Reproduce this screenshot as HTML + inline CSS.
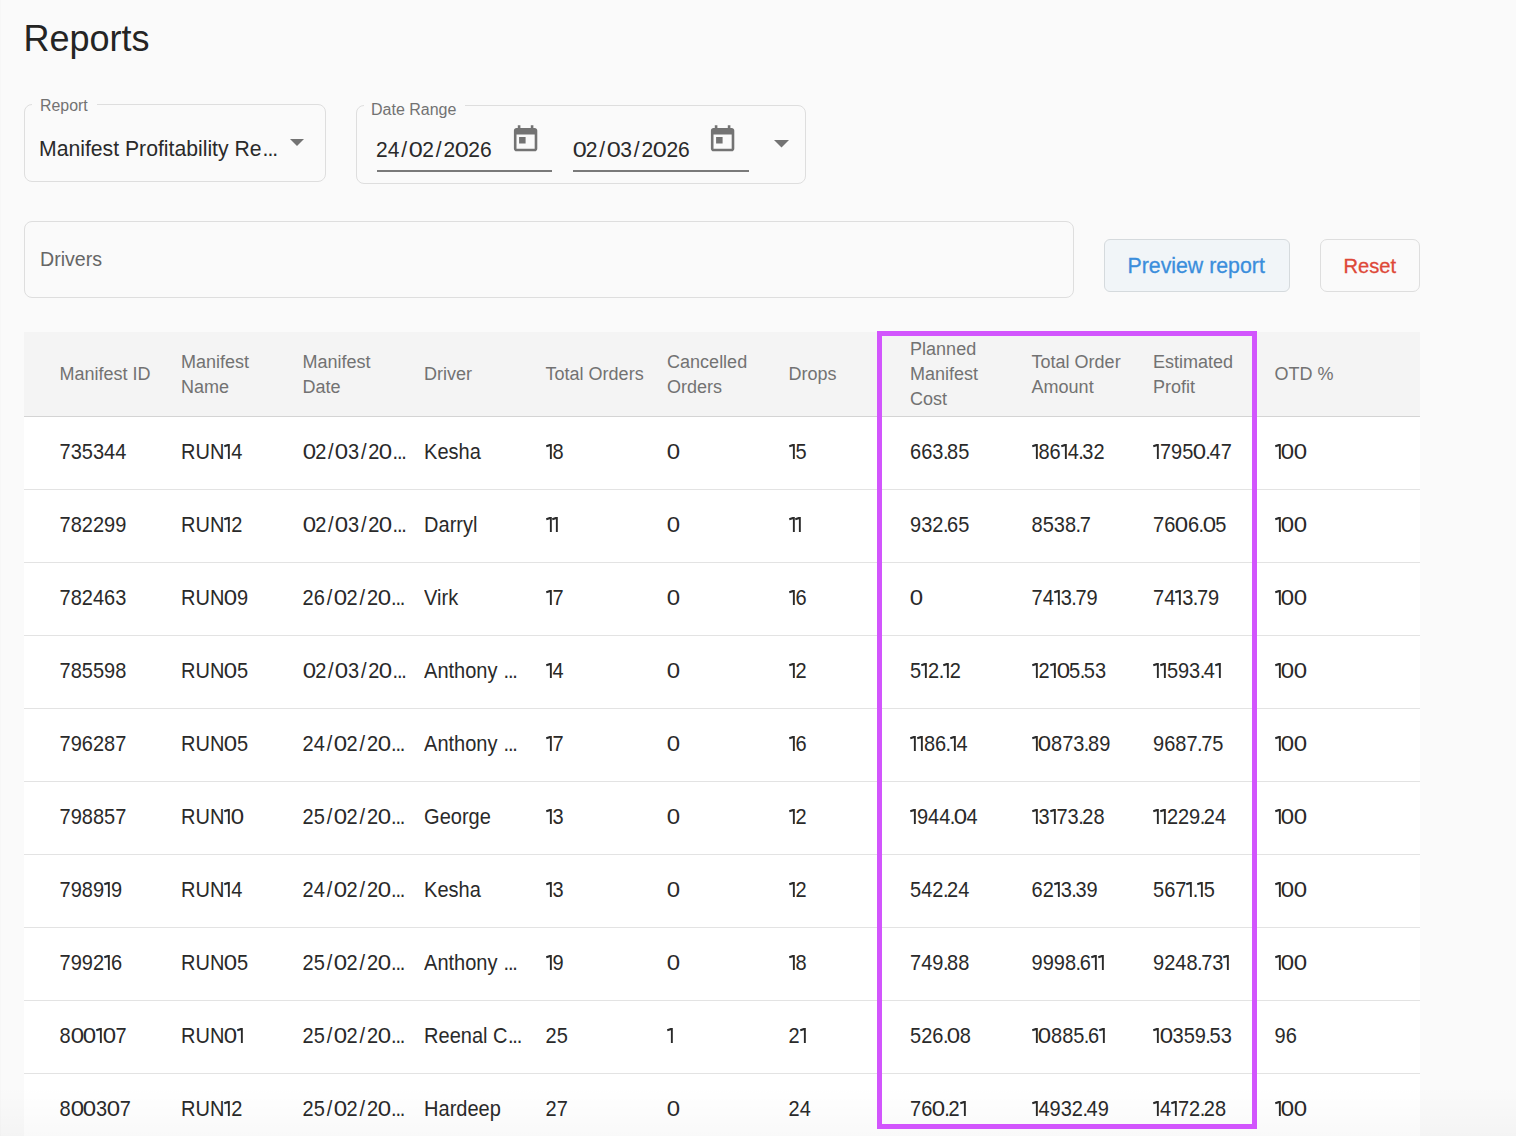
<!DOCTYPE html>
<html><head><meta charset="utf-8"><style>
html,body{margin:0;padding:0;}
body{width:1516px;height:1136px;overflow:hidden;background:#fafafa;position:relative;font-family:"Liberation Sans", sans-serif;}
.t{position:absolute;white-space:nowrap;line-height:1;}
.box{position:absolute;box-sizing:border-box;}
i.n1{display:inline-block;width:6.9px;position:relative;}
i.n1 svg{display:block;}
i.z{display:inline-block;width:0.63em;font-style:normal;}
i.z b{display:inline-block;font-weight:normal;transform:translateX(0.04em) scaleX(1.2);transform-origin:0.275em 0;}
i.sl{font-style:normal;margin:0 0.09em;}
i.dt{font-style:normal;margin:0 -0.07em 0 -0.03em;}
i.el{font-style:normal;letter-spacing:-1.2px;margin-left:0.5px;}
</style></head><body>
<div class="box" style="left:0;top:0;width:1px;height:1136px;background:#f7f7f7"></div>
<div class="t" style="left:23.50px;top:20.61px;font-size:36px;color:#242424;">Reports</div>
<div class="box" style="left:24px;top:104px;width:302px;height:78px;border:1px solid #dedede;border-radius:8px"></div>
<div class="box" style="left:32px;top:100px;width:65px;height:8px;background:#fafafa"></div>
<div class="t" style="left:40.00px;top:98.01px;font-size:15.9px;color:#727272;">Report</div>
<div class="t" style="left:39.00px;top:138.41px;font-size:21.2px;color:#2a2a2a;">Manifest Profitability Re<i class="el" style="letter-spacing:-1px;margin-left:1px">...</i></div>
<svg class="box" style="left:289px;top:138px" width="16" height="9" viewBox="0 0 16 9"><path d="M1 1h14l-7 7z" fill="#737373"/></svg>
<div class="box" style="left:356px;top:105px;width:450px;height:79px;border:1px solid #dedede;border-radius:8px"></div>
<div class="box" style="left:364px;top:100px;width:101px;height:9px;background:#fafafa"></div>
<div class="t" style="left:371.00px;top:102.20px;font-size:16px;color:#727272;">Date Range</div>
<div class="t" style="left:376.00px;top:139.31px;font-size:21px;color:#2a2a2a;transform:scaleY(1.04);transform-origin:0 17.99px;">24<i class="sl">/</i><i class="z"><b>0</b></i>2<i class="sl">/</i>2<i class="z"><b>0</b></i>26</div>
<div class="t" style="left:572.50px;top:139.31px;font-size:21px;color:#2a2a2a;transform:scaleY(1.04);transform-origin:0 17.99px;"><i class="z"><b>0</b></i>2<i class="sl">/</i><i class="z"><b>0</b></i>3<i class="sl">/</i>2<i class="z"><b>0</b></i>26</div>
<div class="box" style="left:377px;top:170px;width:175px;height:2px;background:#7a7a7a"></div>
<div class="box" style="left:573px;top:170px;width:176px;height:2px;background:#7a7a7a"></div>
<svg class="box" style="left:510.3px;top:123.7px" width="31.2" height="31.2" viewBox="0 0 24 24" fill="#737373"><path d="M19 3h-1V1h-2v2H8V1H6v2H5c-1.11 0-1.99.9-1.99 2L3 19c0 1.1.89 2 2 2h14c1.1 0 2-.9 2-2V5c0-1.1-.9-2-2-2zm0 16H5V8h14v11zM7 10h5v5H7z"/></svg>
<svg class="box" style="left:707.2px;top:123.7px" width="31.2" height="31.2" viewBox="0 0 24 24" fill="#737373"><path d="M19 3h-1V1h-2v2H8V1H6v2H5c-1.11 0-1.99.9-1.99 2L3 19c0 1.1.89 2 2 2h14c1.1 0 2-.9 2-2V5c0-1.1-.9-2-2-2zm0 16H5V8h14v11zM7 10h5v5H7z"/></svg>
<svg class="box" style="left:773px;top:139px" width="17" height="10" viewBox="0 0 17 10"><path d="M1 1h15l-7.5 7.5z" fill="#737373"/></svg>
<div class="box" style="left:24px;top:221px;width:1050px;height:77px;border:1px solid #dedede;border-radius:8px"></div>
<div class="t" style="left:40.00px;top:249.90px;font-size:19.6px;color:#666666;">Drivers</div>
<div class="box" style="left:1104px;top:239px;width:186px;height:53px;border:1px solid #d5dadd;border-radius:6px;background:#f1f5f8"></div>
<div class="t" style="left:1127.50px;top:256.20px;font-size:21.3px;color:#3b8edc;-webkit-text-stroke:0.3px #3b8edc;">Preview report</div>
<div class="box" style="left:1320px;top:239px;width:100px;height:53px;border:1px solid #dedede;border-radius:7px"></div>
<div class="t" style="left:1343.50px;top:256.20px;font-size:20.1px;color:#de4838;-webkit-text-stroke:0.3px #de4838;">Reset</div>
<div class="box" style="left:24px;top:332px;width:1396px;height:84px;background:#f4f4f4"></div>
<div class="box" style="left:24px;top:416px;width:1396px;height:720px;background:#ffffff"></div>
<div class="box" style="left:24px;top:416px;width:1396px;height:1px;background:#d4d4d4"></div>
<div class="box" style="left:24px;top:489px;width:1396px;height:1px;background:#e3e3e3"></div>
<div class="box" style="left:24px;top:562px;width:1396px;height:1px;background:#e3e3e3"></div>
<div class="box" style="left:24px;top:635px;width:1396px;height:1px;background:#e3e3e3"></div>
<div class="box" style="left:24px;top:708px;width:1396px;height:1px;background:#e3e3e3"></div>
<div class="box" style="left:24px;top:781px;width:1396px;height:1px;background:#e3e3e3"></div>
<div class="box" style="left:24px;top:854px;width:1396px;height:1px;background:#e3e3e3"></div>
<div class="box" style="left:24px;top:927px;width:1396px;height:1px;background:#e3e3e3"></div>
<div class="box" style="left:24px;top:1000px;width:1396px;height:1px;background:#e3e3e3"></div>
<div class="box" style="left:24px;top:1073px;width:1396px;height:1px;background:#e3e3e3"></div>
<div class="t" style="left:59.60px;top:365.01px;font-size:18px;color:#727272;">Manifest ID</div>
<div class="t" style="left:181.10px;top:352.51px;font-size:18px;color:#727272;">Manifest</div>
<div class="t" style="left:181.10px;top:377.51px;font-size:18px;color:#727272;">Name</div>
<div class="t" style="left:302.60px;top:352.51px;font-size:18px;color:#727272;">Manifest</div>
<div class="t" style="left:302.60px;top:377.51px;font-size:18px;color:#727272;">Date</div>
<div class="t" style="left:424.10px;top:365.01px;font-size:18px;color:#727272;">Driver</div>
<div class="t" style="left:545.60px;top:365.01px;font-size:18px;color:#727272;">Total Orders</div>
<div class="t" style="left:667.10px;top:352.51px;font-size:18px;color:#727272;">Cancelled</div>
<div class="t" style="left:667.10px;top:377.51px;font-size:18px;color:#727272;">Orders</div>
<div class="t" style="left:788.60px;top:365.01px;font-size:18px;color:#727272;">Drops</div>
<div class="t" style="left:910.10px;top:340.01px;font-size:18px;color:#727272;">Planned</div>
<div class="t" style="left:910.10px;top:365.01px;font-size:18px;color:#727272;">Manifest</div>
<div class="t" style="left:910.10px;top:390.01px;font-size:18px;color:#727272;">Cost</div>
<div class="t" style="left:1031.60px;top:352.51px;font-size:18px;color:#727272;">Total Order</div>
<div class="t" style="left:1031.60px;top:377.51px;font-size:18px;color:#727272;">Amount</div>
<div class="t" style="left:1153.10px;top:352.51px;font-size:18px;color:#727272;">Estimated</div>
<div class="t" style="left:1153.10px;top:377.51px;font-size:18px;color:#727272;">Profit</div>
<div class="t" style="left:1274.60px;top:365.01px;font-size:18px;color:#727272;">OTD %</div>
<div class="t" style="left:59.60px;top:442.20px;font-size:20px;color:#2a2a2a;transform:scaleY(1.08);transform-origin:0 17.00px;">735344</div>
<div class="t" style="left:181.10px;top:442.20px;font-size:20px;color:#2a2a2a;transform:scaleY(1.08);transform-origin:0 17.00px;">RUN<i class="n1"><svg width="7" height="14.3" viewBox="0 0 7 14.3"><path d="M3.9 0H5.8V14.3H3.9V2.1L0.5 3.1L0 1.3Z" fill="currentColor"/></svg></i>4</div>
<div class="t" style="left:302.60px;top:442.20px;font-size:20px;color:#2a2a2a;transform:scaleY(1.08);transform-origin:0 17.00px;"><i class="z"><b>0</b></i>2<i class="sl">/</i><i class="z"><b>0</b></i>3<i class="sl">/</i>2<i class="z"><b>0</b></i><i class="el">...</i></div>
<div class="t" style="left:424.10px;top:442.20px;font-size:20px;color:#2a2a2a;transform:scaleY(1.08);transform-origin:0 17.00px;">Kesha</div>
<div class="t" style="left:545.60px;top:442.20px;font-size:20px;color:#2a2a2a;transform:scaleY(1.08);transform-origin:0 17.00px;"><i class="n1"><svg width="7" height="14.3" viewBox="0 0 7 14.3"><path d="M3.9 0H5.8V14.3H3.9V2.1L0.5 3.1L0 1.3Z" fill="currentColor"/></svg></i>8</div>
<div class="t" style="left:667.10px;top:442.20px;font-size:20px;color:#2a2a2a;transform:scaleY(1.08);transform-origin:0 17.00px;"><i class="z"><b>0</b></i></div>
<div class="t" style="left:788.60px;top:442.20px;font-size:20px;color:#2a2a2a;transform:scaleY(1.08);transform-origin:0 17.00px;"><i class="n1"><svg width="7" height="14.3" viewBox="0 0 7 14.3"><path d="M3.9 0H5.8V14.3H3.9V2.1L0.5 3.1L0 1.3Z" fill="currentColor"/></svg></i>5</div>
<div class="t" style="left:910.10px;top:442.20px;font-size:20px;color:#2a2a2a;transform:scaleY(1.08);transform-origin:0 17.00px;">663<i class="dt">.</i>85</div>
<div class="t" style="left:1031.60px;top:442.20px;font-size:20px;color:#2a2a2a;transform:scaleY(1.08);transform-origin:0 17.00px;"><i class="n1"><svg width="7" height="14.3" viewBox="0 0 7 14.3"><path d="M3.9 0H5.8V14.3H3.9V2.1L0.5 3.1L0 1.3Z" fill="currentColor"/></svg></i>86<i class="n1"><svg width="7" height="14.3" viewBox="0 0 7 14.3"><path d="M3.9 0H5.8V14.3H3.9V2.1L0.5 3.1L0 1.3Z" fill="currentColor"/></svg></i>4<i class="dt">.</i>32</div>
<div class="t" style="left:1153.10px;top:442.20px;font-size:20px;color:#2a2a2a;transform:scaleY(1.08);transform-origin:0 17.00px;"><i class="n1"><svg width="7" height="14.3" viewBox="0 0 7 14.3"><path d="M3.9 0H5.8V14.3H3.9V2.1L0.5 3.1L0 1.3Z" fill="currentColor"/></svg></i>795<i class="z"><b>0</b></i><i class="dt">.</i>47</div>
<div class="t" style="left:1274.60px;top:442.20px;font-size:20px;color:#2a2a2a;transform:scaleY(1.08);transform-origin:0 17.00px;"><i class="n1"><svg width="7" height="14.3" viewBox="0 0 7 14.3"><path d="M3.9 0H5.8V14.3H3.9V2.1L0.5 3.1L0 1.3Z" fill="currentColor"/></svg></i><i class="z"><b>0</b></i><i class="z"><b>0</b></i></div>
<div class="t" style="left:59.60px;top:515.20px;font-size:20px;color:#2a2a2a;transform:scaleY(1.08);transform-origin:0 17.00px;">782299</div>
<div class="t" style="left:181.10px;top:515.20px;font-size:20px;color:#2a2a2a;transform:scaleY(1.08);transform-origin:0 17.00px;">RUN<i class="n1"><svg width="7" height="14.3" viewBox="0 0 7 14.3"><path d="M3.9 0H5.8V14.3H3.9V2.1L0.5 3.1L0 1.3Z" fill="currentColor"/></svg></i>2</div>
<div class="t" style="left:302.60px;top:515.20px;font-size:20px;color:#2a2a2a;transform:scaleY(1.08);transform-origin:0 17.00px;"><i class="z"><b>0</b></i>2<i class="sl">/</i><i class="z"><b>0</b></i>3<i class="sl">/</i>2<i class="z"><b>0</b></i><i class="el">...</i></div>
<div class="t" style="left:424.10px;top:515.20px;font-size:20px;color:#2a2a2a;transform:scaleY(1.08);transform-origin:0 17.00px;">Darryl</div>
<div class="t" style="left:545.60px;top:515.20px;font-size:20px;color:#2a2a2a;transform:scaleY(1.08);transform-origin:0 17.00px;"><i class="n1"><svg width="7" height="14.3" viewBox="0 0 7 14.3"><path d="M3.9 0H5.8V14.3H3.9V2.1L0.5 3.1L0 1.3Z" fill="currentColor"/></svg></i><i class="n1"><svg width="7" height="14.3" viewBox="0 0 7 14.3"><path d="M3.9 0H5.8V14.3H3.9V2.1L0.5 3.1L0 1.3Z" fill="currentColor"/></svg></i></div>
<div class="t" style="left:667.10px;top:515.20px;font-size:20px;color:#2a2a2a;transform:scaleY(1.08);transform-origin:0 17.00px;"><i class="z"><b>0</b></i></div>
<div class="t" style="left:788.60px;top:515.20px;font-size:20px;color:#2a2a2a;transform:scaleY(1.08);transform-origin:0 17.00px;"><i class="n1"><svg width="7" height="14.3" viewBox="0 0 7 14.3"><path d="M3.9 0H5.8V14.3H3.9V2.1L0.5 3.1L0 1.3Z" fill="currentColor"/></svg></i><i class="n1"><svg width="7" height="14.3" viewBox="0 0 7 14.3"><path d="M3.9 0H5.8V14.3H3.9V2.1L0.5 3.1L0 1.3Z" fill="currentColor"/></svg></i></div>
<div class="t" style="left:910.10px;top:515.20px;font-size:20px;color:#2a2a2a;transform:scaleY(1.08);transform-origin:0 17.00px;">932<i class="dt">.</i>65</div>
<div class="t" style="left:1031.60px;top:515.20px;font-size:20px;color:#2a2a2a;transform:scaleY(1.08);transform-origin:0 17.00px;">8538<i class="dt">.</i>7</div>
<div class="t" style="left:1153.10px;top:515.20px;font-size:20px;color:#2a2a2a;transform:scaleY(1.08);transform-origin:0 17.00px;">76<i class="z"><b>0</b></i>6<i class="dt">.</i><i class="z"><b>0</b></i>5</div>
<div class="t" style="left:1274.60px;top:515.20px;font-size:20px;color:#2a2a2a;transform:scaleY(1.08);transform-origin:0 17.00px;"><i class="n1"><svg width="7" height="14.3" viewBox="0 0 7 14.3"><path d="M3.9 0H5.8V14.3H3.9V2.1L0.5 3.1L0 1.3Z" fill="currentColor"/></svg></i><i class="z"><b>0</b></i><i class="z"><b>0</b></i></div>
<div class="t" style="left:59.60px;top:588.20px;font-size:20px;color:#2a2a2a;transform:scaleY(1.08);transform-origin:0 17.00px;">782463</div>
<div class="t" style="left:181.10px;top:588.20px;font-size:20px;color:#2a2a2a;transform:scaleY(1.08);transform-origin:0 17.00px;">RUN<i class="z"><b>0</b></i>9</div>
<div class="t" style="left:302.60px;top:588.20px;font-size:20px;color:#2a2a2a;transform:scaleY(1.08);transform-origin:0 17.00px;">26<i class="sl">/</i><i class="z"><b>0</b></i>2<i class="sl">/</i>2<i class="z"><b>0</b></i><i class="el">...</i></div>
<div class="t" style="left:424.10px;top:588.20px;font-size:20px;color:#2a2a2a;transform:scaleY(1.08);transform-origin:0 17.00px;">Virk</div>
<div class="t" style="left:545.60px;top:588.20px;font-size:20px;color:#2a2a2a;transform:scaleY(1.08);transform-origin:0 17.00px;"><i class="n1"><svg width="7" height="14.3" viewBox="0 0 7 14.3"><path d="M3.9 0H5.8V14.3H3.9V2.1L0.5 3.1L0 1.3Z" fill="currentColor"/></svg></i>7</div>
<div class="t" style="left:667.10px;top:588.20px;font-size:20px;color:#2a2a2a;transform:scaleY(1.08);transform-origin:0 17.00px;"><i class="z"><b>0</b></i></div>
<div class="t" style="left:788.60px;top:588.20px;font-size:20px;color:#2a2a2a;transform:scaleY(1.08);transform-origin:0 17.00px;"><i class="n1"><svg width="7" height="14.3" viewBox="0 0 7 14.3"><path d="M3.9 0H5.8V14.3H3.9V2.1L0.5 3.1L0 1.3Z" fill="currentColor"/></svg></i>6</div>
<div class="t" style="left:910.10px;top:588.20px;font-size:20px;color:#2a2a2a;transform:scaleY(1.08);transform-origin:0 17.00px;"><i class="z"><b>0</b></i></div>
<div class="t" style="left:1031.60px;top:588.20px;font-size:20px;color:#2a2a2a;transform:scaleY(1.08);transform-origin:0 17.00px;">74<i class="n1"><svg width="7" height="14.3" viewBox="0 0 7 14.3"><path d="M3.9 0H5.8V14.3H3.9V2.1L0.5 3.1L0 1.3Z" fill="currentColor"/></svg></i>3<i class="dt">.</i>79</div>
<div class="t" style="left:1153.10px;top:588.20px;font-size:20px;color:#2a2a2a;transform:scaleY(1.08);transform-origin:0 17.00px;">74<i class="n1"><svg width="7" height="14.3" viewBox="0 0 7 14.3"><path d="M3.9 0H5.8V14.3H3.9V2.1L0.5 3.1L0 1.3Z" fill="currentColor"/></svg></i>3<i class="dt">.</i>79</div>
<div class="t" style="left:1274.60px;top:588.20px;font-size:20px;color:#2a2a2a;transform:scaleY(1.08);transform-origin:0 17.00px;"><i class="n1"><svg width="7" height="14.3" viewBox="0 0 7 14.3"><path d="M3.9 0H5.8V14.3H3.9V2.1L0.5 3.1L0 1.3Z" fill="currentColor"/></svg></i><i class="z"><b>0</b></i><i class="z"><b>0</b></i></div>
<div class="t" style="left:59.60px;top:661.20px;font-size:20px;color:#2a2a2a;transform:scaleY(1.08);transform-origin:0 17.00px;">785598</div>
<div class="t" style="left:181.10px;top:661.20px;font-size:20px;color:#2a2a2a;transform:scaleY(1.08);transform-origin:0 17.00px;">RUN<i class="z"><b>0</b></i>5</div>
<div class="t" style="left:302.60px;top:661.20px;font-size:20px;color:#2a2a2a;transform:scaleY(1.08);transform-origin:0 17.00px;"><i class="z"><b>0</b></i>2<i class="sl">/</i><i class="z"><b>0</b></i>3<i class="sl">/</i>2<i class="z"><b>0</b></i><i class="el">...</i></div>
<div class="t" style="left:424.10px;top:661.20px;font-size:20px;color:#2a2a2a;transform:scaleY(1.08);transform-origin:0 17.00px;">Anthony <i class="el">...</i></div>
<div class="t" style="left:545.60px;top:661.20px;font-size:20px;color:#2a2a2a;transform:scaleY(1.08);transform-origin:0 17.00px;"><i class="n1"><svg width="7" height="14.3" viewBox="0 0 7 14.3"><path d="M3.9 0H5.8V14.3H3.9V2.1L0.5 3.1L0 1.3Z" fill="currentColor"/></svg></i>4</div>
<div class="t" style="left:667.10px;top:661.20px;font-size:20px;color:#2a2a2a;transform:scaleY(1.08);transform-origin:0 17.00px;"><i class="z"><b>0</b></i></div>
<div class="t" style="left:788.60px;top:661.20px;font-size:20px;color:#2a2a2a;transform:scaleY(1.08);transform-origin:0 17.00px;"><i class="n1"><svg width="7" height="14.3" viewBox="0 0 7 14.3"><path d="M3.9 0H5.8V14.3H3.9V2.1L0.5 3.1L0 1.3Z" fill="currentColor"/></svg></i>2</div>
<div class="t" style="left:910.10px;top:661.20px;font-size:20px;color:#2a2a2a;transform:scaleY(1.08);transform-origin:0 17.00px;">5<i class="n1"><svg width="7" height="14.3" viewBox="0 0 7 14.3"><path d="M3.9 0H5.8V14.3H3.9V2.1L0.5 3.1L0 1.3Z" fill="currentColor"/></svg></i>2<i class="dt">.</i><i class="n1"><svg width="7" height="14.3" viewBox="0 0 7 14.3"><path d="M3.9 0H5.8V14.3H3.9V2.1L0.5 3.1L0 1.3Z" fill="currentColor"/></svg></i>2</div>
<div class="t" style="left:1031.60px;top:661.20px;font-size:20px;color:#2a2a2a;transform:scaleY(1.08);transform-origin:0 17.00px;"><i class="n1"><svg width="7" height="14.3" viewBox="0 0 7 14.3"><path d="M3.9 0H5.8V14.3H3.9V2.1L0.5 3.1L0 1.3Z" fill="currentColor"/></svg></i>2<i class="n1"><svg width="7" height="14.3" viewBox="0 0 7 14.3"><path d="M3.9 0H5.8V14.3H3.9V2.1L0.5 3.1L0 1.3Z" fill="currentColor"/></svg></i><i class="z"><b>0</b></i>5<i class="dt">.</i>53</div>
<div class="t" style="left:1153.10px;top:661.20px;font-size:20px;color:#2a2a2a;transform:scaleY(1.08);transform-origin:0 17.00px;"><i class="n1"><svg width="7" height="14.3" viewBox="0 0 7 14.3"><path d="M3.9 0H5.8V14.3H3.9V2.1L0.5 3.1L0 1.3Z" fill="currentColor"/></svg></i><i class="n1"><svg width="7" height="14.3" viewBox="0 0 7 14.3"><path d="M3.9 0H5.8V14.3H3.9V2.1L0.5 3.1L0 1.3Z" fill="currentColor"/></svg></i>593<i class="dt">.</i>4<i class="n1"><svg width="7" height="14.3" viewBox="0 0 7 14.3"><path d="M3.9 0H5.8V14.3H3.9V2.1L0.5 3.1L0 1.3Z" fill="currentColor"/></svg></i></div>
<div class="t" style="left:1274.60px;top:661.20px;font-size:20px;color:#2a2a2a;transform:scaleY(1.08);transform-origin:0 17.00px;"><i class="n1"><svg width="7" height="14.3" viewBox="0 0 7 14.3"><path d="M3.9 0H5.8V14.3H3.9V2.1L0.5 3.1L0 1.3Z" fill="currentColor"/></svg></i><i class="z"><b>0</b></i><i class="z"><b>0</b></i></div>
<div class="t" style="left:59.60px;top:734.20px;font-size:20px;color:#2a2a2a;transform:scaleY(1.08);transform-origin:0 17.00px;">796287</div>
<div class="t" style="left:181.10px;top:734.20px;font-size:20px;color:#2a2a2a;transform:scaleY(1.08);transform-origin:0 17.00px;">RUN<i class="z"><b>0</b></i>5</div>
<div class="t" style="left:302.60px;top:734.20px;font-size:20px;color:#2a2a2a;transform:scaleY(1.08);transform-origin:0 17.00px;">24<i class="sl">/</i><i class="z"><b>0</b></i>2<i class="sl">/</i>2<i class="z"><b>0</b></i><i class="el">...</i></div>
<div class="t" style="left:424.10px;top:734.20px;font-size:20px;color:#2a2a2a;transform:scaleY(1.08);transform-origin:0 17.00px;">Anthony <i class="el">...</i></div>
<div class="t" style="left:545.60px;top:734.20px;font-size:20px;color:#2a2a2a;transform:scaleY(1.08);transform-origin:0 17.00px;"><i class="n1"><svg width="7" height="14.3" viewBox="0 0 7 14.3"><path d="M3.9 0H5.8V14.3H3.9V2.1L0.5 3.1L0 1.3Z" fill="currentColor"/></svg></i>7</div>
<div class="t" style="left:667.10px;top:734.20px;font-size:20px;color:#2a2a2a;transform:scaleY(1.08);transform-origin:0 17.00px;"><i class="z"><b>0</b></i></div>
<div class="t" style="left:788.60px;top:734.20px;font-size:20px;color:#2a2a2a;transform:scaleY(1.08);transform-origin:0 17.00px;"><i class="n1"><svg width="7" height="14.3" viewBox="0 0 7 14.3"><path d="M3.9 0H5.8V14.3H3.9V2.1L0.5 3.1L0 1.3Z" fill="currentColor"/></svg></i>6</div>
<div class="t" style="left:910.10px;top:734.20px;font-size:20px;color:#2a2a2a;transform:scaleY(1.08);transform-origin:0 17.00px;"><i class="n1"><svg width="7" height="14.3" viewBox="0 0 7 14.3"><path d="M3.9 0H5.8V14.3H3.9V2.1L0.5 3.1L0 1.3Z" fill="currentColor"/></svg></i><i class="n1"><svg width="7" height="14.3" viewBox="0 0 7 14.3"><path d="M3.9 0H5.8V14.3H3.9V2.1L0.5 3.1L0 1.3Z" fill="currentColor"/></svg></i>86<i class="dt">.</i><i class="n1"><svg width="7" height="14.3" viewBox="0 0 7 14.3"><path d="M3.9 0H5.8V14.3H3.9V2.1L0.5 3.1L0 1.3Z" fill="currentColor"/></svg></i>4</div>
<div class="t" style="left:1031.60px;top:734.20px;font-size:20px;color:#2a2a2a;transform:scaleY(1.08);transform-origin:0 17.00px;"><i class="n1"><svg width="7" height="14.3" viewBox="0 0 7 14.3"><path d="M3.9 0H5.8V14.3H3.9V2.1L0.5 3.1L0 1.3Z" fill="currentColor"/></svg></i><i class="z"><b>0</b></i>873<i class="dt">.</i>89</div>
<div class="t" style="left:1153.10px;top:734.20px;font-size:20px;color:#2a2a2a;transform:scaleY(1.08);transform-origin:0 17.00px;">9687<i class="dt">.</i>75</div>
<div class="t" style="left:1274.60px;top:734.20px;font-size:20px;color:#2a2a2a;transform:scaleY(1.08);transform-origin:0 17.00px;"><i class="n1"><svg width="7" height="14.3" viewBox="0 0 7 14.3"><path d="M3.9 0H5.8V14.3H3.9V2.1L0.5 3.1L0 1.3Z" fill="currentColor"/></svg></i><i class="z"><b>0</b></i><i class="z"><b>0</b></i></div>
<div class="t" style="left:59.60px;top:807.20px;font-size:20px;color:#2a2a2a;transform:scaleY(1.08);transform-origin:0 17.00px;">798857</div>
<div class="t" style="left:181.10px;top:807.20px;font-size:20px;color:#2a2a2a;transform:scaleY(1.08);transform-origin:0 17.00px;">RUN<i class="n1"><svg width="7" height="14.3" viewBox="0 0 7 14.3"><path d="M3.9 0H5.8V14.3H3.9V2.1L0.5 3.1L0 1.3Z" fill="currentColor"/></svg></i><i class="z"><b>0</b></i></div>
<div class="t" style="left:302.60px;top:807.20px;font-size:20px;color:#2a2a2a;transform:scaleY(1.08);transform-origin:0 17.00px;">25<i class="sl">/</i><i class="z"><b>0</b></i>2<i class="sl">/</i>2<i class="z"><b>0</b></i><i class="el">...</i></div>
<div class="t" style="left:424.10px;top:807.20px;font-size:20px;color:#2a2a2a;transform:scaleY(1.08);transform-origin:0 17.00px;">George</div>
<div class="t" style="left:545.60px;top:807.20px;font-size:20px;color:#2a2a2a;transform:scaleY(1.08);transform-origin:0 17.00px;"><i class="n1"><svg width="7" height="14.3" viewBox="0 0 7 14.3"><path d="M3.9 0H5.8V14.3H3.9V2.1L0.5 3.1L0 1.3Z" fill="currentColor"/></svg></i>3</div>
<div class="t" style="left:667.10px;top:807.20px;font-size:20px;color:#2a2a2a;transform:scaleY(1.08);transform-origin:0 17.00px;"><i class="z"><b>0</b></i></div>
<div class="t" style="left:788.60px;top:807.20px;font-size:20px;color:#2a2a2a;transform:scaleY(1.08);transform-origin:0 17.00px;"><i class="n1"><svg width="7" height="14.3" viewBox="0 0 7 14.3"><path d="M3.9 0H5.8V14.3H3.9V2.1L0.5 3.1L0 1.3Z" fill="currentColor"/></svg></i>2</div>
<div class="t" style="left:910.10px;top:807.20px;font-size:20px;color:#2a2a2a;transform:scaleY(1.08);transform-origin:0 17.00px;"><i class="n1"><svg width="7" height="14.3" viewBox="0 0 7 14.3"><path d="M3.9 0H5.8V14.3H3.9V2.1L0.5 3.1L0 1.3Z" fill="currentColor"/></svg></i>944<i class="dt">.</i><i class="z"><b>0</b></i>4</div>
<div class="t" style="left:1031.60px;top:807.20px;font-size:20px;color:#2a2a2a;transform:scaleY(1.08);transform-origin:0 17.00px;"><i class="n1"><svg width="7" height="14.3" viewBox="0 0 7 14.3"><path d="M3.9 0H5.8V14.3H3.9V2.1L0.5 3.1L0 1.3Z" fill="currentColor"/></svg></i>3<i class="n1"><svg width="7" height="14.3" viewBox="0 0 7 14.3"><path d="M3.9 0H5.8V14.3H3.9V2.1L0.5 3.1L0 1.3Z" fill="currentColor"/></svg></i>73<i class="dt">.</i>28</div>
<div class="t" style="left:1153.10px;top:807.20px;font-size:20px;color:#2a2a2a;transform:scaleY(1.08);transform-origin:0 17.00px;"><i class="n1"><svg width="7" height="14.3" viewBox="0 0 7 14.3"><path d="M3.9 0H5.8V14.3H3.9V2.1L0.5 3.1L0 1.3Z" fill="currentColor"/></svg></i><i class="n1"><svg width="7" height="14.3" viewBox="0 0 7 14.3"><path d="M3.9 0H5.8V14.3H3.9V2.1L0.5 3.1L0 1.3Z" fill="currentColor"/></svg></i>229<i class="dt">.</i>24</div>
<div class="t" style="left:1274.60px;top:807.20px;font-size:20px;color:#2a2a2a;transform:scaleY(1.08);transform-origin:0 17.00px;"><i class="n1"><svg width="7" height="14.3" viewBox="0 0 7 14.3"><path d="M3.9 0H5.8V14.3H3.9V2.1L0.5 3.1L0 1.3Z" fill="currentColor"/></svg></i><i class="z"><b>0</b></i><i class="z"><b>0</b></i></div>
<div class="t" style="left:59.60px;top:880.20px;font-size:20px;color:#2a2a2a;transform:scaleY(1.08);transform-origin:0 17.00px;">7989<i class="n1"><svg width="7" height="14.3" viewBox="0 0 7 14.3"><path d="M3.9 0H5.8V14.3H3.9V2.1L0.5 3.1L0 1.3Z" fill="currentColor"/></svg></i>9</div>
<div class="t" style="left:181.10px;top:880.20px;font-size:20px;color:#2a2a2a;transform:scaleY(1.08);transform-origin:0 17.00px;">RUN<i class="n1"><svg width="7" height="14.3" viewBox="0 0 7 14.3"><path d="M3.9 0H5.8V14.3H3.9V2.1L0.5 3.1L0 1.3Z" fill="currentColor"/></svg></i>4</div>
<div class="t" style="left:302.60px;top:880.20px;font-size:20px;color:#2a2a2a;transform:scaleY(1.08);transform-origin:0 17.00px;">24<i class="sl">/</i><i class="z"><b>0</b></i>2<i class="sl">/</i>2<i class="z"><b>0</b></i><i class="el">...</i></div>
<div class="t" style="left:424.10px;top:880.20px;font-size:20px;color:#2a2a2a;transform:scaleY(1.08);transform-origin:0 17.00px;">Kesha</div>
<div class="t" style="left:545.60px;top:880.20px;font-size:20px;color:#2a2a2a;transform:scaleY(1.08);transform-origin:0 17.00px;"><i class="n1"><svg width="7" height="14.3" viewBox="0 0 7 14.3"><path d="M3.9 0H5.8V14.3H3.9V2.1L0.5 3.1L0 1.3Z" fill="currentColor"/></svg></i>3</div>
<div class="t" style="left:667.10px;top:880.20px;font-size:20px;color:#2a2a2a;transform:scaleY(1.08);transform-origin:0 17.00px;"><i class="z"><b>0</b></i></div>
<div class="t" style="left:788.60px;top:880.20px;font-size:20px;color:#2a2a2a;transform:scaleY(1.08);transform-origin:0 17.00px;"><i class="n1"><svg width="7" height="14.3" viewBox="0 0 7 14.3"><path d="M3.9 0H5.8V14.3H3.9V2.1L0.5 3.1L0 1.3Z" fill="currentColor"/></svg></i>2</div>
<div class="t" style="left:910.10px;top:880.20px;font-size:20px;color:#2a2a2a;transform:scaleY(1.08);transform-origin:0 17.00px;">542<i class="dt">.</i>24</div>
<div class="t" style="left:1031.60px;top:880.20px;font-size:20px;color:#2a2a2a;transform:scaleY(1.08);transform-origin:0 17.00px;">62<i class="n1"><svg width="7" height="14.3" viewBox="0 0 7 14.3"><path d="M3.9 0H5.8V14.3H3.9V2.1L0.5 3.1L0 1.3Z" fill="currentColor"/></svg></i>3<i class="dt">.</i>39</div>
<div class="t" style="left:1153.10px;top:880.20px;font-size:20px;color:#2a2a2a;transform:scaleY(1.08);transform-origin:0 17.00px;">567<i class="n1"><svg width="7" height="14.3" viewBox="0 0 7 14.3"><path d="M3.9 0H5.8V14.3H3.9V2.1L0.5 3.1L0 1.3Z" fill="currentColor"/></svg></i><i class="dt">.</i><i class="n1"><svg width="7" height="14.3" viewBox="0 0 7 14.3"><path d="M3.9 0H5.8V14.3H3.9V2.1L0.5 3.1L0 1.3Z" fill="currentColor"/></svg></i>5</div>
<div class="t" style="left:1274.60px;top:880.20px;font-size:20px;color:#2a2a2a;transform:scaleY(1.08);transform-origin:0 17.00px;"><i class="n1"><svg width="7" height="14.3" viewBox="0 0 7 14.3"><path d="M3.9 0H5.8V14.3H3.9V2.1L0.5 3.1L0 1.3Z" fill="currentColor"/></svg></i><i class="z"><b>0</b></i><i class="z"><b>0</b></i></div>
<div class="t" style="left:59.60px;top:953.20px;font-size:20px;color:#2a2a2a;transform:scaleY(1.08);transform-origin:0 17.00px;">7992<i class="n1"><svg width="7" height="14.3" viewBox="0 0 7 14.3"><path d="M3.9 0H5.8V14.3H3.9V2.1L0.5 3.1L0 1.3Z" fill="currentColor"/></svg></i>6</div>
<div class="t" style="left:181.10px;top:953.20px;font-size:20px;color:#2a2a2a;transform:scaleY(1.08);transform-origin:0 17.00px;">RUN<i class="z"><b>0</b></i>5</div>
<div class="t" style="left:302.60px;top:953.20px;font-size:20px;color:#2a2a2a;transform:scaleY(1.08);transform-origin:0 17.00px;">25<i class="sl">/</i><i class="z"><b>0</b></i>2<i class="sl">/</i>2<i class="z"><b>0</b></i><i class="el">...</i></div>
<div class="t" style="left:424.10px;top:953.20px;font-size:20px;color:#2a2a2a;transform:scaleY(1.08);transform-origin:0 17.00px;">Anthony <i class="el">...</i></div>
<div class="t" style="left:545.60px;top:953.20px;font-size:20px;color:#2a2a2a;transform:scaleY(1.08);transform-origin:0 17.00px;"><i class="n1"><svg width="7" height="14.3" viewBox="0 0 7 14.3"><path d="M3.9 0H5.8V14.3H3.9V2.1L0.5 3.1L0 1.3Z" fill="currentColor"/></svg></i>9</div>
<div class="t" style="left:667.10px;top:953.20px;font-size:20px;color:#2a2a2a;transform:scaleY(1.08);transform-origin:0 17.00px;"><i class="z"><b>0</b></i></div>
<div class="t" style="left:788.60px;top:953.20px;font-size:20px;color:#2a2a2a;transform:scaleY(1.08);transform-origin:0 17.00px;"><i class="n1"><svg width="7" height="14.3" viewBox="0 0 7 14.3"><path d="M3.9 0H5.8V14.3H3.9V2.1L0.5 3.1L0 1.3Z" fill="currentColor"/></svg></i>8</div>
<div class="t" style="left:910.10px;top:953.20px;font-size:20px;color:#2a2a2a;transform:scaleY(1.08);transform-origin:0 17.00px;">749<i class="dt">.</i>88</div>
<div class="t" style="left:1031.60px;top:953.20px;font-size:20px;color:#2a2a2a;transform:scaleY(1.08);transform-origin:0 17.00px;">9998<i class="dt">.</i>6<i class="n1"><svg width="7" height="14.3" viewBox="0 0 7 14.3"><path d="M3.9 0H5.8V14.3H3.9V2.1L0.5 3.1L0 1.3Z" fill="currentColor"/></svg></i><i class="n1"><svg width="7" height="14.3" viewBox="0 0 7 14.3"><path d="M3.9 0H5.8V14.3H3.9V2.1L0.5 3.1L0 1.3Z" fill="currentColor"/></svg></i></div>
<div class="t" style="left:1153.10px;top:953.20px;font-size:20px;color:#2a2a2a;transform:scaleY(1.08);transform-origin:0 17.00px;">9248<i class="dt">.</i>73<i class="n1"><svg width="7" height="14.3" viewBox="0 0 7 14.3"><path d="M3.9 0H5.8V14.3H3.9V2.1L0.5 3.1L0 1.3Z" fill="currentColor"/></svg></i></div>
<div class="t" style="left:1274.60px;top:953.20px;font-size:20px;color:#2a2a2a;transform:scaleY(1.08);transform-origin:0 17.00px;"><i class="n1"><svg width="7" height="14.3" viewBox="0 0 7 14.3"><path d="M3.9 0H5.8V14.3H3.9V2.1L0.5 3.1L0 1.3Z" fill="currentColor"/></svg></i><i class="z"><b>0</b></i><i class="z"><b>0</b></i></div>
<div class="t" style="left:59.60px;top:1026.22px;font-size:20px;color:#2a2a2a;transform:scaleY(1.08);transform-origin:0 16.98px;">8<i class="z"><b>0</b></i><i class="z"><b>0</b></i><i class="n1"><svg width="7" height="14.3" viewBox="0 0 7 14.3"><path d="M3.9 0H5.8V14.3H3.9V2.1L0.5 3.1L0 1.3Z" fill="currentColor"/></svg></i><i class="z"><b>0</b></i>7</div>
<div class="t" style="left:181.10px;top:1026.22px;font-size:20px;color:#2a2a2a;transform:scaleY(1.08);transform-origin:0 16.98px;">RUN<i class="z"><b>0</b></i><i class="n1"><svg width="7" height="14.3" viewBox="0 0 7 14.3"><path d="M3.9 0H5.8V14.3H3.9V2.1L0.5 3.1L0 1.3Z" fill="currentColor"/></svg></i></div>
<div class="t" style="left:302.60px;top:1026.22px;font-size:20px;color:#2a2a2a;transform:scaleY(1.08);transform-origin:0 16.98px;">25<i class="sl">/</i><i class="z"><b>0</b></i>2<i class="sl">/</i>2<i class="z"><b>0</b></i><i class="el">...</i></div>
<div class="t" style="left:424.10px;top:1026.22px;font-size:20px;color:#2a2a2a;transform:scaleY(1.08);transform-origin:0 16.98px;">Reenal C<i class="el">...</i></div>
<div class="t" style="left:545.60px;top:1026.22px;font-size:20px;color:#2a2a2a;transform:scaleY(1.08);transform-origin:0 16.98px;">25</div>
<div class="t" style="left:667.10px;top:1026.22px;font-size:20px;color:#2a2a2a;transform:scaleY(1.08);transform-origin:0 16.98px;"><i class="n1"><svg width="7" height="14.3" viewBox="0 0 7 14.3"><path d="M3.9 0H5.8V14.3H3.9V2.1L0.5 3.1L0 1.3Z" fill="currentColor"/></svg></i></div>
<div class="t" style="left:788.60px;top:1026.22px;font-size:20px;color:#2a2a2a;transform:scaleY(1.08);transform-origin:0 16.98px;">2<i class="n1"><svg width="7" height="14.3" viewBox="0 0 7 14.3"><path d="M3.9 0H5.8V14.3H3.9V2.1L0.5 3.1L0 1.3Z" fill="currentColor"/></svg></i></div>
<div class="t" style="left:910.10px;top:1026.22px;font-size:20px;color:#2a2a2a;transform:scaleY(1.08);transform-origin:0 16.98px;">526<i class="dt">.</i><i class="z"><b>0</b></i>8</div>
<div class="t" style="left:1031.60px;top:1026.22px;font-size:20px;color:#2a2a2a;transform:scaleY(1.08);transform-origin:0 16.98px;"><i class="n1"><svg width="7" height="14.3" viewBox="0 0 7 14.3"><path d="M3.9 0H5.8V14.3H3.9V2.1L0.5 3.1L0 1.3Z" fill="currentColor"/></svg></i><i class="z"><b>0</b></i>885<i class="dt">.</i>6<i class="n1"><svg width="7" height="14.3" viewBox="0 0 7 14.3"><path d="M3.9 0H5.8V14.3H3.9V2.1L0.5 3.1L0 1.3Z" fill="currentColor"/></svg></i></div>
<div class="t" style="left:1153.10px;top:1026.22px;font-size:20px;color:#2a2a2a;transform:scaleY(1.08);transform-origin:0 16.98px;"><i class="n1"><svg width="7" height="14.3" viewBox="0 0 7 14.3"><path d="M3.9 0H5.8V14.3H3.9V2.1L0.5 3.1L0 1.3Z" fill="currentColor"/></svg></i><i class="z"><b>0</b></i>359<i class="dt">.</i>53</div>
<div class="t" style="left:1274.60px;top:1026.22px;font-size:20px;color:#2a2a2a;transform:scaleY(1.08);transform-origin:0 16.98px;">96</div>
<div class="t" style="left:59.60px;top:1099.22px;font-size:20px;color:#2a2a2a;transform:scaleY(1.08);transform-origin:0 16.98px;">8<i class="z"><b>0</b></i><i class="z"><b>0</b></i>3<i class="z"><b>0</b></i>7</div>
<div class="t" style="left:181.10px;top:1099.22px;font-size:20px;color:#2a2a2a;transform:scaleY(1.08);transform-origin:0 16.98px;">RUN<i class="n1"><svg width="7" height="14.3" viewBox="0 0 7 14.3"><path d="M3.9 0H5.8V14.3H3.9V2.1L0.5 3.1L0 1.3Z" fill="currentColor"/></svg></i>2</div>
<div class="t" style="left:302.60px;top:1099.22px;font-size:20px;color:#2a2a2a;transform:scaleY(1.08);transform-origin:0 16.98px;">25<i class="sl">/</i><i class="z"><b>0</b></i>2<i class="sl">/</i>2<i class="z"><b>0</b></i><i class="el">...</i></div>
<div class="t" style="left:424.10px;top:1099.22px;font-size:20px;color:#2a2a2a;transform:scaleY(1.08);transform-origin:0 16.98px;">Hardeep</div>
<div class="t" style="left:545.60px;top:1099.22px;font-size:20px;color:#2a2a2a;transform:scaleY(1.08);transform-origin:0 16.98px;">27</div>
<div class="t" style="left:667.10px;top:1099.22px;font-size:20px;color:#2a2a2a;transform:scaleY(1.08);transform-origin:0 16.98px;"><i class="z"><b>0</b></i></div>
<div class="t" style="left:788.60px;top:1099.22px;font-size:20px;color:#2a2a2a;transform:scaleY(1.08);transform-origin:0 16.98px;">24</div>
<div class="t" style="left:910.10px;top:1099.22px;font-size:20px;color:#2a2a2a;transform:scaleY(1.08);transform-origin:0 16.98px;">76<i class="z"><b>0</b></i><i class="dt">.</i>2<i class="n1"><svg width="7" height="14.3" viewBox="0 0 7 14.3"><path d="M3.9 0H5.8V14.3H3.9V2.1L0.5 3.1L0 1.3Z" fill="currentColor"/></svg></i></div>
<div class="t" style="left:1031.60px;top:1099.22px;font-size:20px;color:#2a2a2a;transform:scaleY(1.08);transform-origin:0 16.98px;"><i class="n1"><svg width="7" height="14.3" viewBox="0 0 7 14.3"><path d="M3.9 0H5.8V14.3H3.9V2.1L0.5 3.1L0 1.3Z" fill="currentColor"/></svg></i>4932<i class="dt">.</i>49</div>
<div class="t" style="left:1153.10px;top:1099.22px;font-size:20px;color:#2a2a2a;transform:scaleY(1.08);transform-origin:0 16.98px;"><i class="n1"><svg width="7" height="14.3" viewBox="0 0 7 14.3"><path d="M3.9 0H5.8V14.3H3.9V2.1L0.5 3.1L0 1.3Z" fill="currentColor"/></svg></i>4<i class="n1"><svg width="7" height="14.3" viewBox="0 0 7 14.3"><path d="M3.9 0H5.8V14.3H3.9V2.1L0.5 3.1L0 1.3Z" fill="currentColor"/></svg></i>72<i class="dt">.</i>28</div>
<div class="t" style="left:1274.60px;top:1099.22px;font-size:20px;color:#2a2a2a;transform:scaleY(1.08);transform-origin:0 16.98px;"><i class="n1"><svg width="7" height="14.3" viewBox="0 0 7 14.3"><path d="M3.9 0H5.8V14.3H3.9V2.1L0.5 3.1L0 1.3Z" fill="currentColor"/></svg></i><i class="z"><b>0</b></i><i class="z"><b>0</b></i></div>
<div class="box" style="left:0px;top:1086px;width:1516px;height:50px;background:linear-gradient(rgba(0,0,0,0),rgba(0,0,0,0.022))"></div>
<div class="box" style="left:877px;top:331px;width:380px;height:798px;border:5px solid #d255fd"></div>
</body></html>
